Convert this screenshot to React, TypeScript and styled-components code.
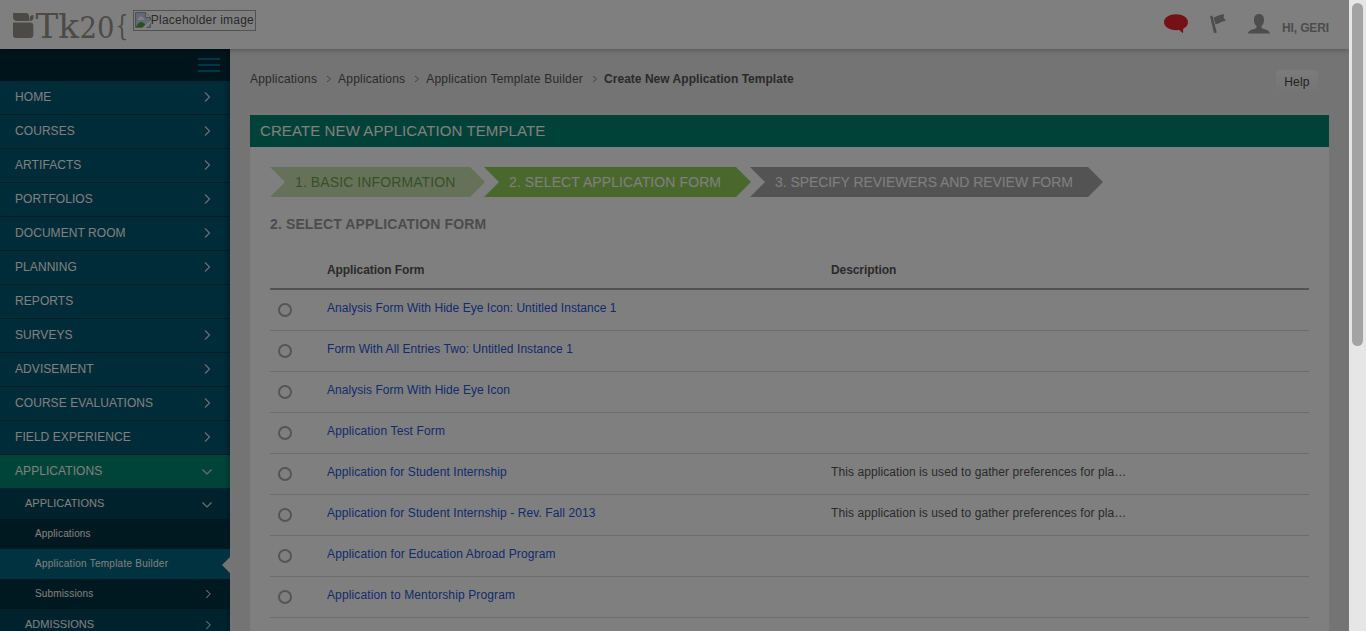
import React from "react";
import styled, { createGlobalStyle } from "styled-components";

const Global = createGlobalStyle`
  *{box-sizing:border-box}
  html,body{margin:0;height:631px;overflow:hidden}
  body{font:12px/16px "Liberation Sans",Arial,sans-serif;color:#555;background:#e8e8e8}
`;
const Window = styled.div`display:flex;width:1366px;height:631px;overflow:hidden;`;
const Page = styled.div`position:relative;width:1349px;height:631px;display:flex;flex-direction:column;overflow:hidden;background:#e8e8e8;`;
const Overlay = styled.div`position:absolute;inset:0;background:rgba(0,0,0,.5);z-index:5;`;
const ScrollTrack = styled.div`width:17px;height:631px;background:#e6e6e6;padding:3px 3px 0;`;
const ScrollThumb = styled.div`height:343px;width:11px;border-radius:6px;background:#a3a3a3;`;

const Header = styled.header`height:49px;flex:none;background:#fff;display:flex;align-items:flex-start;padding:10px 20px 0 12px;box-shadow:0 1px 5px rgba(0,0,0,.28);position:relative;z-index:1;`;
const Logo = styled.svg`width:118px;height:34px;flex:none;overflow:visible;`;
const LogoText = styled.text`font-family:"DejaVu Serif","Liberation Serif",serif;`;
const MissingImage = styled.div`display:flex;width:123px;height:21px;margin-left:3px;border:1px solid #a5a5a5;padding:1px;font-size:12px;line-height:16px;letter-spacing:.22px;color:#555;white-space:nowrap;`;
const Tools = styled.div`margin-left:auto;display:flex;align-items:flex-start;`;
const ToolIcon = styled.svg`display:block;height:24px;flex:none;`;
const Greeting = styled.span`font-weight:bold;font-size:12px;color:#999;letter-spacing:-.12px;margin:10px 0 0 12px;line-height:16px;`;

const Body = styled.div`display:flex;height:582px;`;
const Sidebar = styled.nav`
  position:relative;width:230px;flex:none;overflow:hidden;background:#005670;color:#fff;
  &::after{content:"";position:absolute;top:0;right:0;width:6px;height:100%;background:linear-gradient(90deg,transparent,rgba(0,0,0,.18));}
`;
const Toggle = styled.div`height:32px;background:#002a36;display:flex;flex-direction:column;align-items:flex-end;gap:4px;padding:9px 10px 0 0;`;
const ToggleBar = styled.span`height:2px;width:22px;background:#006c8b;`;
const Item = styled.div<{ $on?: boolean }>`
  height:${p => p.$on ? 33 : 34}px;padding:0 16px 2px 15px;display:flex;align-items:center;justify-content:space-between;
  font-size:12px;letter-spacing:.07px;color:#fff;background:${p => p.$on ? "#008670" : "#005670"};
  border-bottom:${p => p.$on ? 0 : 1}px solid #003e51;
`;
const SubItem = styled.div`height:31px;padding:0 16px 0 25px;display:flex;align-items:center;justify-content:space-between;font-size:11px;background:#00455a;`;
const SubLabel = styled.span`padding-bottom:2px;`;
const Leaf = styled.div<{ $on?: boolean; $track?: number }>`position:relative;z-index:1;height:30px;padding:0 16px 1px 35px;display:flex;align-items:center;justify-content:space-between;font-size:10px;letter-spacing:${p => p.$track ?? .15}px;background:${p => p.$on ? "#00647f" : "#00303f"};`;
const Pointer = styled.span`position:absolute;right:0;top:8px;border:8px solid transparent;border-left:0;border-right-color:#e8e8e8;`;
const Chevron = styled.svg<{ $small?: boolean }>`width:${p => p.$small ? 12 : 14}px;height:${p => p.$small ? 12 : 14}px;fill:none;stroke:#d4dfe3;stroke-width:1.2;`;

const Main = styled.main`flex:1;padding:20px 20px 0;`;
const TopLine = styled.div`display:flex;justify-content:space-between;height:46px;`;
const Crumbs = styled.div`display:flex;align-items:center;height:20px;color:#555;white-space:nowrap;`;
const Crumb = styled.span<{ $last?: boolean }>`font-weight:${p => p.$last ? "bold" : "normal"};letter-spacing:${p => p.$last ? .03 : .2}px;`;
const CrumbArrow = styled.svg`width:21px;height:8px;fill:none;stroke:#888;`;
const Help = styled.button`width:42px;height:24px;margin:1px 11px 0 0;padding:0;border:0;border-radius:4px;background:linear-gradient(#f7f7f7,#e8e8e8);font:12px "Liberation Sans",sans-serif;letter-spacing:.2px;color:#444;`;
const Panel = styled.section`background:#fff;height:530px;`;
const PanelTitle = styled.h1`margin:0;height:32px;line-height:32px;padding-left:10px;background:#008370;color:#fff;font-size:15px;font-weight:normal;letter-spacing:.1px;`;
const Content = styled.div`padding:20px 20px 0;`;
const Steps = styled.div`display:flex;height:30px;`;
const Step = styled.div<{ $w: number; $bg: string; $fg: string; $track: number }>`
  width:${p => p.$w}px;margin-right:-1px;padding-left:25px;line-height:30px;font-size:14px;white-space:nowrap;letter-spacing:${p => p.$track}px;
  background:${p => p.$bg};color:${p => p.$fg};
  clip-path:polygon(0 0,calc(100% - 15px) 0,100% 50%,calc(100% - 15px) 100%,0 100%,15px 50%);
`;
const Heading = styled.h2`margin:19px 0 0;font-size:14px;line-height:16px;letter-spacing:.12px;color:#999;`;
const Row = styled.div<{ $head?: boolean }>`
  display:grid;grid-template-columns:57px 504px 1fr;
  height:${p => p.$head ? 58 : 41}px;
  padding-top:${p => p.$head ? 30 : 10}px;
  font-weight:${p => p.$head ? "bold" : "normal"};
  letter-spacing:${p => p.$head ? -.08 : .08}px;
  border-bottom:${p => p.$head ? "2px solid #a6a6a6" : "1px solid #d8d8d8"};
`;
const Radio = styled.span`width:14px;height:14px;border:2px solid #aaa;border-radius:50%;margin:3px 0 0 8px;`;
const FormLink = styled.a<{ $track: number }>`color:#2856d8;letter-spacing:${p => p.$track}px;`;

const Arrow = ({ down, small }: { down?: boolean; small?: boolean }) => (
  <Chevron $small={small} viewBox="0 0 14 14"><path d={down ? "M2.5 5.500 7 10 11.5 5.500" : "M5 2.5 9.5 7 5 11.5"} /></Chevron>
);

const menu = ["HOME", "COURSES", "ARTIFACTS", "PORTFOLIOS", "DOCUMENT ROOM", "PLANNING", "REPORTS", "SURVEYS", "ADVISEMENT", "COURSE EVALUATIONS", "FIELD EXPERIENCE"];
const crumbs = ["Applications", "Applications", "Application Template Builder"];
const note = "This application is used to gather preferences for pla…";
const forms: [string, string, number][] = [
  ["Analysis Form With Hide Eye Icon: Untitled Instance 1", "", .04],
  ["Form With All Entries Two: Untitled Instance 1", "", .06],
  ["Analysis Form With Hide Eye Icon", "", .05],
  ["Application Test Form", "", .14],
  ["Application for Student Internship", note, .09],
  ["Application for Student Internship - Rev. Fall 2013", note, .09],
  ["Application for Education Abroad Program", "", .13],
  ["Application to Mentorship Program", "", .12],
];

export default function App() {
  return (
    <Window>
      <Global />
      <Page>
        <Header>
          <Logo viewBox="12 10 118 34" fill="#96958d">
            <path d="M13 13h13q3 0 3 3v5H17q-4 0-4-4zM29.500 21v-2q0-4 4-4v2q0 4-4 4zM13 22.500h17q3.300 0 3.300 3V35q0 3-3 3H16q-3 0-3-3z" />
            <LogoText x="35.500" y="38" fontSize="33" textLength="43.500" lengthAdjust="spacingAndGlyphs">Tk</LogoText>
            <LogoText x="79.500" y="38" fontSize="30" textLength="35" lengthAdjust="spacingAndGlyphs">20</LogoText>
            <LogoText x="115.500" y="35" fontSize="28" textLength="13" lengthAdjust="spacingAndGlyphs">{"{"}</LogoText>
          </Logo>
          <MissingImage>
            <svg width="16" height="16" viewBox="0 0 16 16">
              <path d="M.5.5h10l5 5v10H.5z" fill="#c5d5f5" stroke="#9c9c9c" />
              <path d="M10.5.5v5h5" fill="#fff" stroke="#9c9c9c" />
              <path d="M3 7q0-2 2-2 2-2 3 1 2 0 1 2H3z" fill="#fff" />
              <path d="M1 15q4-8 9-3v3z" fill="#4ea52e" />
              <path d="m7 16 9-8v3l-5 5z" fill="#fff" />
            </svg>
            Placeholder image
          </MissingImage>
          <Tools>
            <ToolIcon width="24" viewBox="0 0 24 24"><path d="M12 4.300c6.500 0 12 3.200 12 8 0 3-2 5.200-4.800 6.500l-.2 4.400-3.800-3.200C6 21 0 17 0 12.300c0-4.800 5.500-8 12-8z" fill="#e9212d" /></ToolIcon>
            <ToolIcon width="60" viewBox="0 0 60 24"><path d="m22 6.300 2.400-.8 4.400 17-2.800.8zM25.500 7.500c3-.3 5-3 10.700-3.200l-.7 3.200 2.500 3.500c-4.500 0-6 2.500-10.500 3.300z" fill="#9a9a9a" /></ToolIcon>
            <ToolIcon width="22" viewBox="0 0 22 24"><path d="M11 4c3.500 0 5 2.400 5 6 0 3-1 5-2.500 6v1.500c1 2 8.500 2 8.500 6H0c0-4 7.500-4 8.500-6V16C7 15 6 13 6 10c0-3.600 1.500-6 5-6z" fill="#9a9a9a" /></ToolIcon>
            <Greeting>HI, GERI</Greeting>
          </Tools>
        </Header>
        <Body>
          <Sidebar>
            <Toggle><ToggleBar /><ToggleBar /><ToggleBar /></Toggle>
            {menu.map(m => <Item key={m}>{m}{m !== "REPORTS" && <Arrow />}</Item>)}
            <Item $on>APPLICATIONS<Arrow down /></Item>
            <SubItem><SubLabel>APPLICATIONS</SubLabel><Arrow down /></SubItem>
            <Leaf>Applications</Leaf>
            <Leaf $on $track={.26}>Application Template Builder<Pointer /></Leaf>
            <Leaf>Submissions<Arrow small /></Leaf>
            <SubItem><SubLabel>ADMISSIONS</SubLabel><Arrow small /></SubItem>
          </Sidebar>
          <Main>
            <TopLine>
              <Crumbs>
                {crumbs.map((c, i) => (
                  <React.Fragment key={i}>
                    <Crumb>{c}</Crumb>
                    <CrumbArrow viewBox="0 0 21 8"><path d="m10 1 3.500 3L10 7" /></CrumbArrow>
                  </React.Fragment>
                ))}
                <Crumb $last>Create New Application Template</Crumb>
              </Crumbs>
              <Help>Help</Help>
            </TopLine>
            <Panel>
              <PanelTitle>CREATE NEW APPLICATION TEMPLATE</PanelTitle>
              <Content>
                <Steps>
                  <Step $w={215} $track={.1} $bg="#cbe5b2" $fg="#6fa053">1. BASIC INFORMATION</Step>
                  <Step $w={267} $track={.1} $bg="#94cf58" $fg="#fff">2. SELECT APPLICATION FORM</Step>
                  <Step $w={353} $track={-.06} $bg="#a6a6a6" $fg="#fff">3. SPECIFY REVIEWERS AND REVIEW FORM</Step>
                </Steps>
                <Heading>2. SELECT APPLICATION FORM</Heading>
                <Row $head><span /><span>Application Form</span><span>Description</span></Row>
                {forms.map(([name, text, track]) => (
                  <Row key={name}><Radio /><FormLink $track={track}>{name}</FormLink><span>{text}</span></Row>
                ))}
              </Content>
            </Panel>
          </Main>
        </Body>
        <Overlay />
      </Page>
      <ScrollTrack><ScrollThumb /></ScrollTrack>
    </Window>
  );
}
